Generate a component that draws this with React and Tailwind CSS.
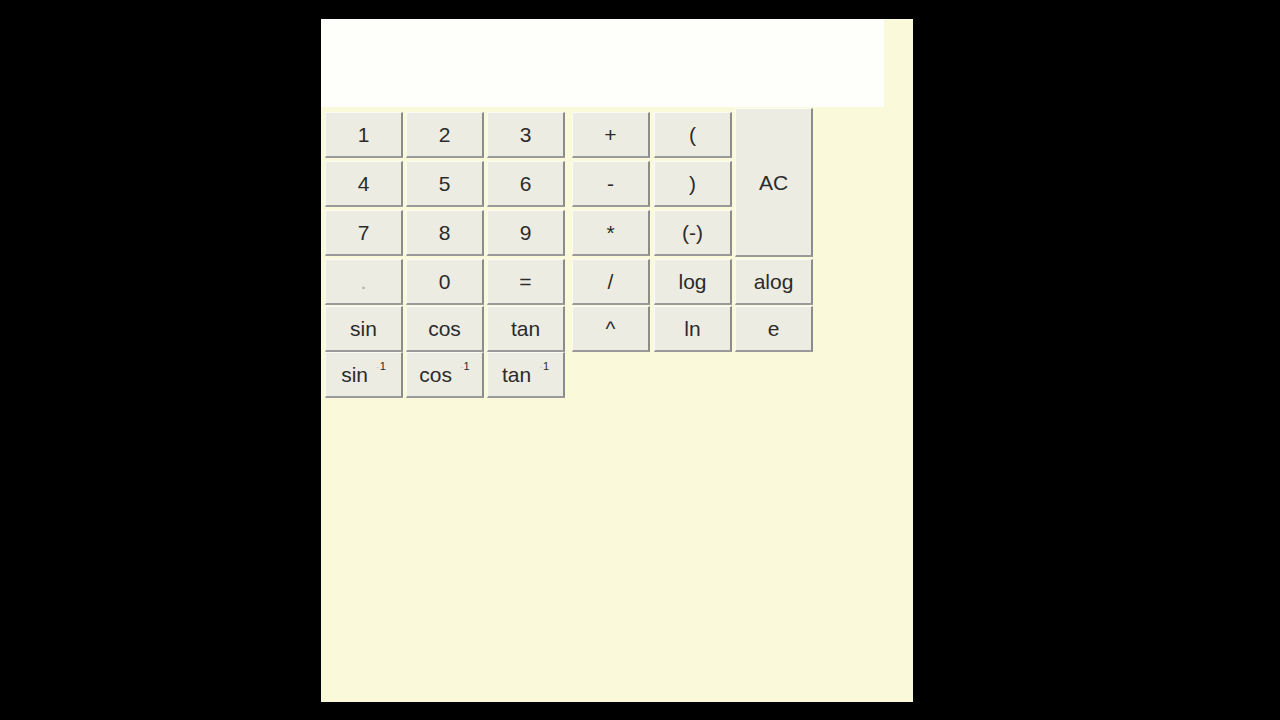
const rows = [
  ["1", "2", "3", "+", "("],
  ["4", "5", "6", "-", ")"],
  ["7", "8", "9", "*", "(-)"],
  [".", "0", "=", "/", "log", "alog"],
  ["sin", "cos", "tan", "^", "ln", "e"],
];

const inverse = ["sin", "cos", "tan"];

function Key({ children, className = "" }) {
  return (
    <button
      className={
        "w-[78px] h-[46px] bg-[#edece3] border-t border-l border-t-[#fbfbf6] border-l-[#fbfbf6] border-r-2 border-b-2 border-r-[#8c8c8c] border-b-[#9a9a9a] text-[21px] text-[#2b2b2b] flex items-center justify-center leading-none " +
        className
      }
    >
      {children}
    </button>
  );
}

export default function App() {
  return (
    <div
      className="w-[1280px] h-[720px] bg-black pt-[19px] pl-[321px]"
      style={{ fontFamily: '"Liberation Sans", Arial, sans-serif' }}
    >
      <div className="w-[592px] h-[683px] bg-[#faf9d9]">
        <div className="w-[563px] h-[88px] bg-[#fefefb]" />
        <div className="pl-[4px] pt-[5px] grid grid-cols-[81px_81px_85px_82px_81px_78px] grid-rows-[49px_49px_49px_47px_46px_46px]">
          {rows.slice(0, 3).map((row, r) =>
            row.map((label, c) => (
              <Key key={r + "-" + c}>{label}</Key>
            ))
          )}
          <div className="col-start-6 row-start-1 row-span-3">
            <Key className="h-[149px] -mt-[4px]">AC</Key>
          </div>
          {rows.slice(3).map((row, r) =>
            row.map((label, c) => (
              <Key key={"b" + r + "-" + c}>
                {label === "." ? (
                  <span className="text-[#aaa]">.</span>
                ) : (
                  label
                )}
              </Key>
            ))
          )}
          {inverse.map((fn) => (
            <Key key={"inv-" + fn}>
              {fn}
              <sup className="ml-[8px] text-[11px] -translate-y-[3px]">
                <span className="text-[#d4d4d4]">-</span>1
              </sup>
            </Key>
          ))}
        </div>
      </div>
    </div>
  );
}
